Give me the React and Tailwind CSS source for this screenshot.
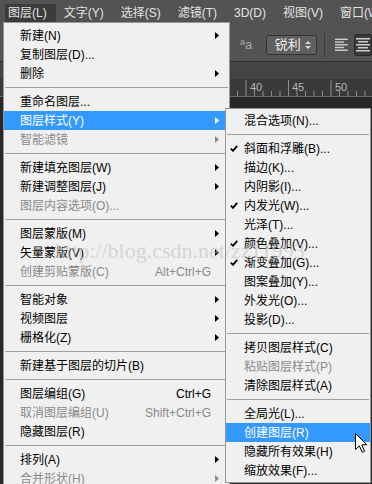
import React from "react";

const menuBar = ["图层(L)", "文字(Y)", "选择(S)", "滤镜(T)", "3D(D)", "视图(V)", "窗口(W)"];

const mainItems = [
  { label: "新建(N)", arrow: true },
  { label: "复制图层(D)..." },
  { label: "删除", arrow: true },
  { sep: true },
  { label: "重命名图层..." },
  { label: "图层样式(Y)", arrow: true, active: true },
  { label: "智能滤镜", arrow: true, disabled: true },
  { sep: true },
  { label: "新建填充图层(W)", arrow: true },
  { label: "新建调整图层(J)", arrow: true },
  { label: "图层内容选项(O)...", disabled: true },
  { sep: true },
  { label: "图层蒙版(M)", arrow: true },
  { label: "矢量蒙版(V)", arrow: true },
  { label: "创建剪贴蒙版(C)", shortcut: "Alt+Ctrl+G", disabled: true },
  { sep: true },
  { label: "智能对象", arrow: true },
  { label: "视频图层", arrow: true },
  { label: "栅格化(Z)", arrow: true },
  { sep: true },
  { label: "新建基于图层的切片(B)" },
  { sep: true },
  { label: "图层编组(G)", shortcut: "Ctrl+G" },
  { label: "取消图层编组(U)", shortcut: "Shift+Ctrl+G", disabled: true },
  { label: "隐藏图层(R)" },
  { sep: true },
  { label: "排列(A)", arrow: true },
  { label: "合并形状(H)", arrow: true, disabled: true },
];

const styleItems = [
  { label: "混合选项(N)..." },
  { sep: true },
  { label: "斜面和浮雕(B)...", checked: true },
  { label: "描边(K)..." },
  { label: "内阴影(I)..." },
  { label: "内发光(W)...", checked: true },
  { label: "光泽(T)..." },
  { label: "颜色叠加(V)...", checked: true },
  { label: "渐变叠加(G)...", checked: true },
  { label: "图案叠加(Y)..." },
  { label: "外发光(O)..." },
  { label: "投影(D)..." },
  { sep: true },
  { label: "拷贝图层样式(C)" },
  { label: "粘贴图层样式(P)", disabled: true },
  { label: "清除图层样式(A)" },
  { sep: true },
  { label: "全局光(L)..." },
  { label: "创建图层(R)", active: true },
  { label: "隐藏所有效果(H)" },
  { label: "缩放效果(F)..." },
];

const textColor = (item) =>
  item.active ? "text-white" : item.disabled ? "text-[#8a8a8a]" : "text-black";

const fillColor = (item) => (item.active ? "#ffffff" : item.disabled ? "#8a8a8a" : "#000000");

const Separator = () => (
  <div className="py-[4px] px-[1px]">
    <div className="h-px bg-[#a0a0a0]" />
  </div>
);

const Arrow = ({ color }) => (
  <svg width="4" height="7" viewBox="0 0 4 7">
    <path d="M0 0L4 3.5L0 7Z" fill={color} />
  </svg>
);

const Check = ({ color }) => (
  <svg width="8" height="7" viewBox="0 0 8 7">
    <path d="M0.8 3.6L3 5.8L7.2 0.8" fill="none" stroke={color} strokeWidth="1.8" />
  </svg>
);

const MainMenu = () => (
  <div className="absolute left-[3px] top-[22px] w-[227px] h-[480px] bg-[#f0f0f0] border border-[#979797] pt-[3px]">
    {mainItems.map((item, i) =>
      item.sep ? (
        <Separator key={i} />
      ) : (
        <div
          key={i}
          className={`h-[19px] flex items-center pl-[16px] pr-[10px] ${item.active ? "bg-[#3399ff]" : ""} ${textColor(item)}`}
        >
          <span className="flex-1 whitespace-nowrap">{item.label}</span>
          {item.shortcut && <span className="mr-[8px]">{item.shortcut}</span>}
          {item.arrow && <Arrow color={fillColor(item)} />}
        </div>
      )
    )}
  </div>
);

const StyleMenu = () => (
  <div className="absolute left-[225px] top-[108px] w-[146px] bg-[#f0f0f0] border border-[#979797] pt-[2px] pb-[2px] z-10">
    {styleItems.map((item, i) =>
      item.sep ? (
        <Separator key={i} />
      ) : (
        <div
          key={i}
          className={`h-[19px] flex items-center pl-[4px] ${item.active ? "bg-[#3399ff]" : ""} ${textColor(item)}`}
        >
          <span className="w-[14px] flex items-center">
            {item.checked && <Check color={fillColor(item)} />}
          </span>
          <span className="whitespace-nowrap">{item.label}</span>
        </div>
      )
    )}
  </div>
);

const Ruler = () => {
  const ticks = [];
  for (let i = 0; i < 20; i++) {
    const x = 246 - 230 + (i - 2) * 8.5;
    if (x < 0 || x > 142) continue;
    const major = (i - 2) % 5 === 0;
    ticks.push(
      <line
        key={i}
        x1={x}
        x2={x}
        y1={major ? 0 : 11}
        y2={16}
        stroke="#8c8c8c"
        strokeWidth="1"
      />
    );
  }
  return (
    <div className="relative h-[16px] bg-[#3a3a3a] pl-[230px]">
      <svg width="142" height="16" className="block">
        {ticks}
      </svg>
      <span className="absolute left-[250px] top-[1px] text-[11px] leading-[12px] text-[#b8b8b8]">40</span>
      <span className="absolute left-[292px] top-[1px] text-[11px] leading-[12px] text-[#b8b8b8]">45</span>
      <span className="absolute left-[335px] top-[1px] text-[11px] leading-[12px] text-[#b8b8b8]">50</span>
    </div>
  );
};

const Cursor = () => (
  <svg
    className="absolute left-[354px] top-[432px] z-20"
    width="14"
    height="22"
    viewBox="0 0 14 22"
  >
    <path
      d="M1.5 1.5L1.5 17.5L5.3 13.8L8.2 20.3L10.6 19.2L7.8 12.8L12.8 12.8Z"
      fill="#ffffff"
      stroke="#000000"
      strokeWidth="1"
      strokeLinejoin="round"
    />
  </svg>
);

const App = () => {
  return (
    <div className="relative w-[372px] h-[484px] overflow-hidden bg-[#282828] text-[12px] font-['Liberation_Sans','Noto_Sans_CJK_SC',sans-serif]">
      {/* menu bar */}
      <div className="h-[22px] bg-[#535353] flex items-end pl-[5px]">
        {menuBar.map((m, i) => (
          <div
            key={m}
            className={`h-[18px] leading-[18px] pl-[3px] pr-[9px] mr-[5px] whitespace-nowrap text-[#e2e2e2] ${i === 0 ? "bg-[#3c3c3c] rounded-t-[2px]" : ""}`}
          >
            {m}
          </div>
        ))}
      </div>

      {/* options bar */}
      <div className="h-[40px] bg-[#535353] border-b border-[#2f2f2f] flex items-center pt-[6px] pl-[240px]">
        <div className="text-[#a8a8a8] leading-none flex items-end w-[14px]">
          <span className="text-[9px] relative -top-[4px]">a</span>
          <span className="text-[13px]">a</span>
        </div>
        <div className="ml-[13px] w-[55px] h-[20px] rounded-[3px] bg-[#606060] border border-[#333] flex items-center pl-[8px] pr-[5px] text-[13px] text-[#ececec]">
          <span className="flex-1">锐利</span>
          <svg width="6" height="10" viewBox="0 0 6 10">
            <path d="M0 4L3 1L6 4Z M0 6L3 9L6 6Z" fill="#d8d8d8" />
          </svg>
        </div>
        <div className="ml-[7px] w-px h-[24px] bg-[#3a3a3a]" />
        <svg className="ml-[10px]" width="15" height="14" viewBox="0 0 15 14">
          <g fill="#d0d0d0">
            <rect x="0" y="0" width="14" height="1.5" />
            <rect x="0" y="3" width="10" height="1.5" />
            <rect x="0" y="6" width="14" height="1.5" />
            <rect x="0" y="9" width="10" height="1.5" />
            <rect x="0" y="12" width="14" height="1.5" />
          </g>
        </svg>
        <div className="ml-[5px] w-[20px] h-[22px] bg-[#3a3a3a] border border-[#2a2a2a] rounded-[2px] flex items-center justify-center">
          <svg width="14" height="14" viewBox="0 0 14 14">
            <g fill="#d0d0d0">
              <rect x="0" y="0" width="14" height="1.5" />
              <rect x="2" y="3" width="10" height="1.5" />
              <rect x="0" y="6" width="14" height="1.5" />
              <rect x="2" y="9" width="10" height="1.5" />
              <rect x="0" y="12" width="14" height="1.5" />
            </g>
          </svg>
        </div>
      </div>

      {/* document tab strip */}
      <div className="h-[18px] bg-[#444444] border-b border-[#353535]" />

      {/* ruler */}
      <Ruler />
      <div className="h-px bg-[#6a6a6a]" />

      <MainMenu />
      <StyleMenu />

      {/* watermark */}
      <div className="absolute left-[55px] top-[239px] z-30 text-[22px] leading-[24px] font-['Liberation_Serif',serif] text-[#c4c4c4] opacity-60 whitespace-nowrap pointer-events-none">
        http://blog.csdn.net/zz11993
      </div>

      <Cursor />
    </div>
  );
};

export default App;
